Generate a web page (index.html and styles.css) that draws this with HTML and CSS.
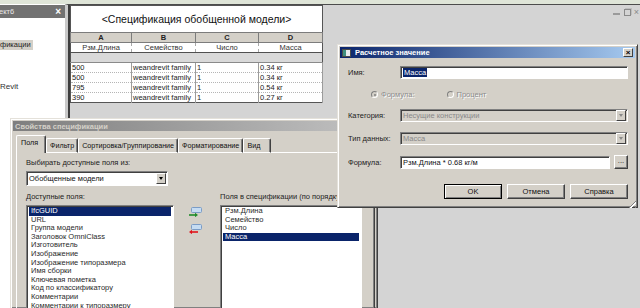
FILE: index.html
```html
<!DOCTYPE html>
<html lang="ru">
	<head>
		<meta charset="UTF-8" />
		<meta name="viewport" content="width=device-width, initial-scale=1.0" />
		<title>Спецификация обобщенной модели</title>
		<link rel="stylesheet" href="styles.css">
	</head>
	<body>
		<div class="topStrip"></div>

		<div class="browserPanel">
			<div class="browserHead">
				<span>ект6</span>
				<span class="browserClose">×</span>
			</div>
			<div class="browserBody">
				<div class="browserItem browserItemActive">фикации</div>
				<div class="browserItem browserItemRevit">Revit</div>
			</div>
		</div>

		<div class="viewArea">
			<div class="viewInner">
				<table class="schedule">
					<colgroup>
						<col class="colA">
						<col class="colB">
						<col class="colC">
						<col class="colD">
					</colgroup>
					<tr>
						<td colspan="4" class="scheduleTitle">&lt;Спецификация обобщенной модели&gt;</td>
					</tr>
					<tr class="scheduleLetters">
						<th>A</th>
						<th>B</th>
						<th>C</th>
						<th>D</th>
					</tr>
					<tr class="scheduleHeads">
						<td>Рзм.Длина</td>
						<td>Семейство</td>
						<td>Число</td>
						<td>Масса</td>
					</tr>
					<tr class="scheduleGap">
						<td colspan="4"></td>
					</tr>
					<tr class="scheduleRow">
						<td>500</td>
						<td>weandrevit family</td>
						<td>1</td>
						<td>0.34 кг</td>
					</tr>
					<tr class="scheduleRow">
						<td>500</td>
						<td>weandrevit family</td>
						<td>1</td>
						<td>0.34 кг</td>
					</tr>
					<tr class="scheduleRow">
						<td>795</td>
						<td>weandrevit family</td>
						<td>1</td>
						<td>0.54 кг</td>
					</tr>
					<tr class="scheduleRow">
						<td>390</td>
						<td>weandrevit family</td>
						<td>1</td>
						<td>0.27 кг</td>
					</tr>
				</table>

				<div class="viewControls">
					<span class="ctlMin"></span>
					<span class="ctlRestore"></span>
					<span class="ctlClose">×</span>
				</div>
			</div>
		</div>

		<!-- Свойства спецификации -->
		<div class="dialog propsDialog">
			<div class="dialogTitle dialogTitleInactive">Свойства спецификации</div>
			<div class="tabs">
				<div class="tab tabActive">Поля</div>
				<div class="tab">Фильтр</div>
				<div class="tab">Сортировка/Группирование</div>
				<div class="tab">Форматирование</div>
				<div class="tab tabView">Вид</div>
			</div>
			<div class="tabPanel">
				<div class="label">Выбирать доступные поля из:</div>
				<div class="combo">
					<span class="comboText">Обобщенные модели</span>
					<span class="comboArrow"></span>
				</div>
				<div class="fields">
					<div class="fieldCol">
						<div class="label">Доступные поля:</div>
						<div class="listBox listAvailable">
							<div class="listItem listItemSelected">IfcGUID</div>
							<div class="listItem">URL</div>
							<div class="listItem">Группа модели</div>
							<div class="listItem">Заголовок OmniClass</div>
							<div class="listItem">Изготовитель</div>
							<div class="listItem">Изображение</div>
							<div class="listItem">Изображение типоразмера</div>
							<div class="listItem">Имя сборки</div>
							<div class="listItem">Ключевая пометка</div>
							<div class="listItem">Код по классификатору</div>
							<div class="listItem">Комментарии</div>
							<div class="listItem">Комментарии к типоразмеру</div>
						</div>
					</div>
					<div class="moveButtons">
						<svg width="13" height="10" viewBox="0 0 13 10">
							<rect x="2.5" y="0.5" width="10" height="5" rx="1" fill="#c6dcf2" stroke="#7b9cc6" />
							<path d="M0 8h6" stroke="#1f8b2a" stroke-width="1.6" />
							<path d="M6 5.8L9 8L6 10.2z" fill="#1f8b2a" />
						</svg>
						<svg width="13" height="10" viewBox="0 0 13 10">
							<rect x="2.5" y="0.5" width="10" height="5" rx="1" fill="#c6dcf2" stroke="#7b9cc6" />
							<path d="M3 8h6" stroke="#e0141c" stroke-width="1.6" />
							<path d="M3 5.8L0 8L3 10.2z" fill="#e0141c" />
						</svg>
					</div>
					<div class="fieldCol">
						<div class="label">Поля в спецификации (по порядку)</div>
						<div class="listBox listChosen">
							<div class="listItem">Рзм.Длина</div>
							<div class="listItem">Семейство</div>
							<div class="listItem">Число</div>
							<div class="listItem listItemSelected">Масса</div>
						</div>
					</div>
				</div>
			</div>
		</div>

		<!-- Расчетное значение -->
		<div class="dialog calcDialog">
			<div class="dialogTitle">
				<svg class="titleIcon" width="9" height="8" viewBox="0 0 9 8">
					<rect x="0.5" y="0.5" width="8" height="7" fill="#e9ecef" stroke="#4a4a4a" />
					<rect x="1" y="1" width="3" height="6" fill="#3f8f7f" />
				</svg>
				<span class="titleText">Расчетное значение</span>
				<span class="titleClose">×</span>
			</div>
			<div class="calcBody">
				<div class="calcRow">
					<span class="calcLabel">Имя:</span>
					<div class="textBox"><span class="textSelected">Масса</span></div>
				</div>
				<div class="radioRow">
					<span class="radio radioChecked"></span>
					<span class="disabledText">Формула:</span>
					<span class="radio radioSecond"></span>
					<span class="disabledText">Процент</span>
				</div>
				<div class="calcRow calcRowSpaced">
					<span class="calcLabel">Категория:</span>
					<div class="combo comboDisabled">
						<span class="comboText">Несущие конструкции</span>
						<span class="comboArrow"></span>
					</div>
				</div>
				<div class="calcRow calcRowSpaced">
					<span class="calcLabel">Тип данных:</span>
					<div class="combo comboDisabled">
						<span class="comboText">Масса</span>
						<span class="comboArrow"></span>
					</div>
				</div>
				<div class="calcRow calcRowSpaced">
					<span class="calcLabel">Формула:</span>
					<div class="textBox formulaBox">Рзм.Длина * 0.68 кг/м</div>
					<div class="button dotsButton">...</div>
				</div>
				<div class="buttonRow">
					<div class="button buttonDefault">OK</div>
					<div class="button">Отмена</div>
					<div class="button">Справка</div>
				</div>
				<div class="grip"></div>
			</div>
		</div>
	</body>
</html>
```

FILE: styles.css
```css
* {
	box-sizing: border-box;
}

body {
	margin: 0;
	width: 640px;
	height: 308px;
	overflow: hidden;
	position: relative;
	background: #d4d4d4;
	font-family: "Liberation Sans", Arial, sans-serif;
	font-size: 7.5px;
	color: #000;
}

.topStrip {
	height: 4px;
	background: #dfe5d8;
}

/* project browser, left */
.browserPanel {
	position: absolute;
	left: 0;
	top: 4px;
	width: 65px;
	bottom: 0;
	background: #fff;
}

.browserHead {
	display: flex;
	justify-content: space-between;
	align-items: center;
	height: 13px;
	margin-top: 1px;
	padding: 0 4px 0 0;
	background: #727272;
	color: #e8e8e8;
	font-size: 7.5px;
}

.browserHead span:first-child {
	margin-left: -1px;
}

.browserClose {
	font-size: 10px;
	font-weight: bold;
	color: #fff;
}

.browserBody {
	display: flex;
	flex-direction: column;
	align-items: flex-start;
	padding-top: 22px;
}

.browserItem {
	font-size: 7.5px;
	color: #222;
	line-height: 10px;
}

.browserItemActive {
	background: #d4d0c8;
	padding-right: 2px;
}

.browserItemRevit {
	margin-top: 32px;
	font-size: 8px;
	color: #333;
}

/* view with the schedule */
.viewArea {
	position: absolute;
	left: 65px;
	top: 4px;
	right: 0;
	bottom: 0;
	border-left: 3px solid #c9c9c9;
	border-top: 1px solid #4c4c4c;
}

.viewInner {
	height: 100%;
	display: flex;
	justify-content: space-between;
	align-items: flex-start;
	border-left: 2px solid #3e3e3e;
}

.schedule {
	border-collapse: collapse;
	table-layout: fixed;
	width: 252px;
	background: #fff;
	border: 1px solid #555;
	font-size: 7.5px;
}

.colA {
	width: 61px;
}

.colB {
	width: 64px;
}

.colC {
	width: 63px;
}

.colD {
	width: 64px;
}

.schedule td,
.schedule th {
	padding: 0 1px;
	height: 10px;
	line-height: 9px;
	white-space: nowrap;
	overflow: hidden;
}

.schedule .scheduleTitle {
	height: 27px;
	text-align: center;
	font-size: 10.5px;
	color: #111;
}

.scheduleLetters th {
	background: #d4d0c8;
	font-weight: bold;
	border: 1px solid #7c7c7c;
	color: #222;
}

.scheduleHeads td {
	text-align: center;
	color: #333;
	border-right: 1px dashed #a8a8a8;
	border-bottom: 1px solid #505050;
}

.schedule .scheduleGap td {
	background: #d9d9d9;
	height: 10px;
	border-bottom: 1px solid #8a8a8a;
}

.scheduleRow td {
	color: #222;
	border-right: 1px solid #9c9c9c;
	border-bottom: 1px dotted #b5b5b5;
}

.viewControls {
	display: flex;
	align-items: center;
	gap: 2px;
	margin-top: 3px;
	margin-right: 1px;
	color: #8a8a8a;
}

.ctlMin {
	width: 7px;
	height: 2px;
	margin-top: 4px;
	background: #9a9a9a;
}

.ctlRestore {
	width: 7px;
	height: 7px;
	border: 1px solid #8a8a8a;
	box-shadow: 1px -1px 0 #bdbdbd;
	margin-left: 2px;
}

.ctlClose {
	font-size: 9px;
	line-height: 8px;
	margin-left: 1px;
}

/* windows dialogs */
.dialog {
	position: absolute;
	background: #d4d0c8;
	border: 1px solid;
	border-color: #e4e1da #404040 #404040 #e4e1da;
	box-shadow: inset 1px 1px 0 #fff, inset -1px -1px 0 #808080;
	padding: 2px;
}

.dialogTitle {
	display: flex;
	align-items: center;
	height: 11px;
	padding: 0 2px;
	font-weight: bold;
	color: #fff;
	background: linear-gradient(to right, #0a246a, #a6caf0);
	white-space: nowrap;
}

.dialogTitleInactive {
	background: linear-gradient(to right, #7e7e7e, #c2c2c2);
	color: #d4d0c8;
	height: 10px;
}

.propsDialog {
	left: 10px;
	top: 118px;
	width: 368px;
	height: 190px;
	border-bottom: none;
	overflow: hidden;
}

.tabs {
	display: flex;
	align-items: flex-end;
	margin: 4px 0 -1px 3px;
	height: 18px;
	font-size: 7.2px;
}

.tab {
	position: relative;
	height: 15px;
	line-height: 14px;
	padding: 0 3px;
	border: 1px solid;
	border-color: #fff #404040 transparent #fff;
	box-shadow: inset -1px 0 0 #808080;
	border-radius: 2px 2px 0 0;
	white-space: nowrap;
	color: #111;
}

.tabActive {
	height: 18px;
	line-height: 14px;
	width: 30px;
	padding-left: 4px;
	background: #d4d0c8;
	border-bottom: none;
	z-index: 1;
}

.tabView {
	width: 28px;
}

.tabPanel {
	margin-left: 3px;
	height: 160px;
	padding: 5px 0 0 9px;
	border: 1px solid;
	border-color: #fff #404040 transparent #fff;
	box-shadow: inset -1px 0 0 #808080;
}

.label {
	line-height: 10px;
	color: #222;
	white-space: nowrap;
}

.combo {
	display: flex;
	justify-content: space-between;
	align-items: center;
	width: 142px;
	height: 15px;
	margin-top: 3px;
	background: #fff;
	border: 1px solid;
	border-color: #808080 #fff #fff #808080;
	box-shadow: inset 1px 1px 0 #404040;
	padding: 1px 1px 1px 2px;
}

.comboText {
	white-space: nowrap;
	color: #111;
}

.comboArrow {
	width: 10px;
	height: 11px;
	flex: none;
	background: #d4d0c8;
	border: 1px solid;
	border-color: #fff #404040 #404040 #fff;
	position: relative;
}

.comboArrow::after {
	content: "";
	position: absolute;
	left: 2px;
	top: 3px;
	border: 2.5px solid transparent;
	border-top: 3px solid #000;
}

.fields {
	display: flex;
	margin-top: 6px;
}

.fieldCol {
	display: flex;
	flex-direction: column;
}

.listBox {
	margin-top: 3px;
	height: 106px;
	overflow: hidden;
	background: #fff;
	border: 1px solid;
	border-color: #808080 #fff #fff #808080;
	box-shadow: inset 1px 1px 0 #404040;
	padding: 1px 2px;
}

.listAvailable {
	width: 148px;
}

.listChosen {
	width: 142px;
}

.listItem {
	height: 8.6px;
	line-height: 8.6px;
	padding-left: 2px;
	color: #2a2a2a;
	white-space: nowrap;
}

.listItemSelected {
	background: #0a246a;
	color: #fff;
}

.moveButtons {
	width: 46px;
	display: flex;
	flex-direction: column;
	gap: 7px;
	padding: 15px 0 0 15px;
}

.calcDialog {
	left: 337px;
	top: 44px;
	width: 301px;
	height: 164px;
}

.titleIcon {
	flex: none;
	margin-right: 4px;
}

.titleText {
	flex: 1;
}

.titleClose {
	width: 10px;
	height: 9px;
	line-height: 8px;
	text-align: center;
	font-size: 8px;
	color: #000;
	background: #d4d0c8;
	border: 1px solid;
	border-color: #fff #404040 #404040 #fff;
}

.calcBody {
	position: relative;
	display: flex;
	flex-direction: column;
	padding: 8px 7px 0 8px;
}

.calcRow {
	display: flex;
	align-items: center;
	gap: 0;
}

.calcRowSpaced {
	margin-top: 10px;
}

.calcLabel {
	width: 52px;
	flex: none;
	color: #222;
}

.textBox {
	flex: 1;
	height: 13px;
	line-height: 10px;
	padding: 1px 2px;
	background: #fff;
	border: 1px solid;
	border-color: #808080 #fff #fff #808080;
	box-shadow: inset 1px 1px 0 #404040;
	color: #111;
	white-space: nowrap;
}

.textSelected {
	background: #0a246a;
	color: #fff;
	padding: 0 1px;
}

.calcDialog .combo {
	flex: 1;
	width: auto;
	height: 13px;
	margin-top: 0;
}

.comboDisabled {
	background: #d4d0c8;
}

.comboDisabled .comboText {
	color: #888;
}

.comboDisabled .comboArrow::after {
	border-top-color: #888;
}

.radioRow {
	display: flex;
	align-items: center;
	margin: 11px 0 0 23px;
	height: 9px;
}

.radio {
	width: 7px;
	height: 7px;
	border-radius: 50%;
	border: 1px solid;
	border-color: #808080 #fff #fff #808080;
	background: #d4d0c8;
	margin-right: 3px;
	position: relative;
}

.radioChecked::after {
	content: "";
	position: absolute;
	left: 1.5px;
	top: 1.5px;
	width: 2px;
	height: 2px;
	border-radius: 50%;
	background: #808080;
}

.radioSecond {
	margin-left: 32px;
}

.disabledText {
	color: #8c8c8c;
	text-shadow: 1px 1px 0 #fff;
}

.formulaBox {
	flex: none;
	width: 210px;
}

.button {
	height: 15px;
	line-height: 13px;
	text-align: center;
	background: #d4d0c8;
	border: 1px solid;
	border-color: #fff #404040 #404040 #fff;
	box-shadow: inset -1px -1px 0 #808080;
	color: #111;
}

.dotsButton {
	width: 16px;
	height: 14px;
	margin-left: 4px;
	line-height: 10px;
}

.buttonRow {
	display: flex;
	justify-content: flex-end;
	gap: 5px;
	margin-top: 15px;
}

.buttonRow .button {
	width: 58px;
}

.buttonDefault {
	outline: 1px solid #000;
	outline-offset: -1px;
	border-color: #000 #404040 #404040 #000;
	box-shadow: inset 1px 1px 0 #fff, inset -1px -1px 0 #808080;
}

.grip {
	position: absolute;
	right: -1px;
	bottom: -9px;
	width: 8px;
	height: 8px;
	background: repeating-linear-gradient(135deg, transparent 0 2px, #808080 2px 3px, #fff 3px 4px);
	clip-path: polygon(100% 0, 100% 100%, 0 100%);
}
```
